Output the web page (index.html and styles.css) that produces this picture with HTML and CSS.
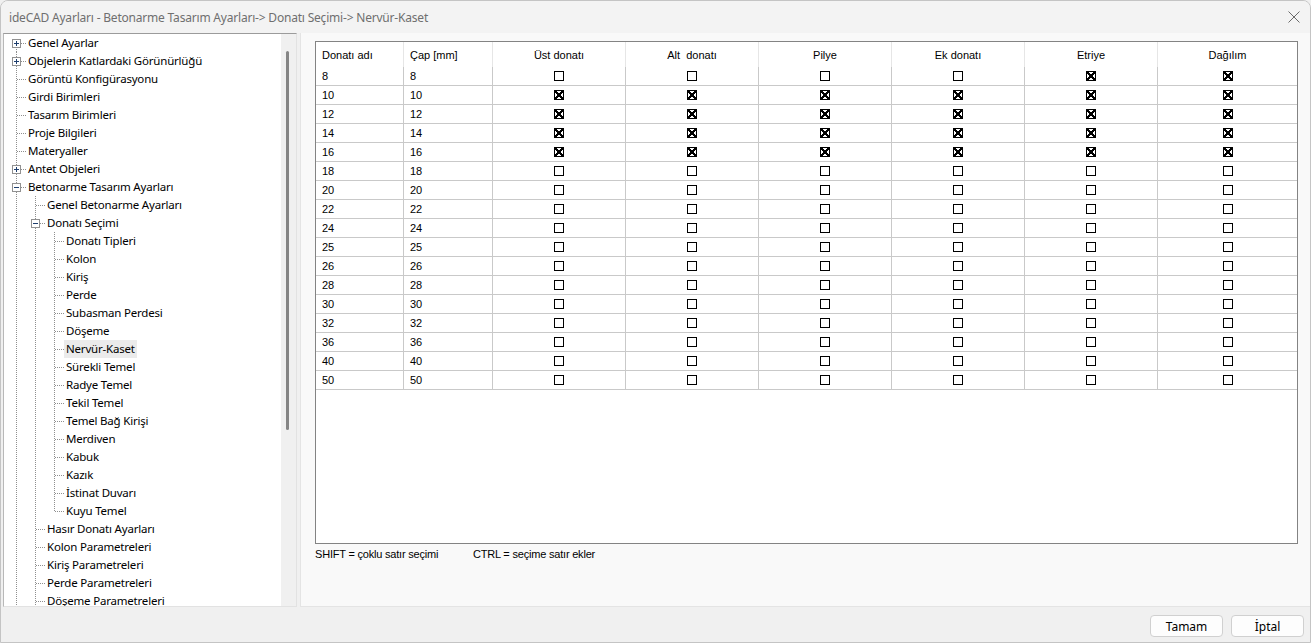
FILE: index.html
```html
<!DOCTYPE html>
<html lang="tr">
<head>
  <meta charset="UTF-8">
  <title>ideCAD Ayarları</title>
  <link rel="stylesheet" href="styles.css">
</head>
<body>
<div class="win">
  <div class="titlebar">
    <span class="title">ideCAD Ayarları - Betonarme Tasarım Ayarları-&gt; Donatı Seçimi-&gt; Nervür-Kaset</span>
    <svg class="close" width="12" height="12" viewBox="0 0 12 12"><path d="M0.5 0.5L11.5 11.5M11.5 0.5L0.5 11.5" stroke="#6a6a6a" stroke-width="1" fill="none"/></svg>
  </div>

  <div class="main">
    <!-- left tree -->
    <div class="treebox">
      <ul class="tree">
        <li><div class="row"><i class="exp plus"></i><span class="lbl">Genel Ayarlar</span></div></li>
        <li><div class="row"><i class="exp plus"></i><span class="lbl">Objelerin Katlardaki Görünürlüğü</span></div></li>
        <li><div class="row"><i class="noexp"></i><span class="lbl">Görüntü Konfigürasyonu</span></div></li>
        <li><div class="row"><i class="noexp"></i><span class="lbl">Girdi Birimleri</span></div></li>
        <li><div class="row"><i class="noexp"></i><span class="lbl">Tasarım Birimleri</span></div></li>
        <li><div class="row"><i class="noexp"></i><span class="lbl">Proje Bilgileri</span></div></li>
        <li><div class="row"><i class="noexp"></i><span class="lbl">Materyaller</span></div></li>
        <li><div class="row"><i class="exp plus"></i><span class="lbl">Antet Objeleri</span></div></li>
        <li><div class="row"><i class="exp"></i><span class="lbl">Betonarme Tasarım Ayarları</span></div>
          <ul>
            <li><div class="row"><i class="noexp"></i><span class="lbl">Genel Betonarme Ayarları</span></div></li>
            <li><div class="row"><i class="exp"></i><span class="lbl">Donatı Seçimi</span></div>
              <ul>
                <li><div class="row"><i class="noexp"></i><span class="lbl">Donatı Tipleri</span></div></li>
                <li><div class="row"><i class="noexp"></i><span class="lbl">Kolon</span></div></li>
                <li><div class="row"><i class="noexp"></i><span class="lbl">Kiriş</span></div></li>
                <li><div class="row"><i class="noexp"></i><span class="lbl">Perde</span></div></li>
                <li><div class="row"><i class="noexp"></i><span class="lbl">Subasman Perdesi</span></div></li>
                <li><div class="row"><i class="noexp"></i><span class="lbl">Döşeme</span></div></li>
                <li><div class="row"><i class="noexp"></i><span class="lbl sel">Nervür-Kaset</span></div></li>
                <li><div class="row"><i class="noexp"></i><span class="lbl">Sürekli Temel</span></div></li>
                <li><div class="row"><i class="noexp"></i><span class="lbl">Radye Temel</span></div></li>
                <li><div class="row"><i class="noexp"></i><span class="lbl">Tekil Temel</span></div></li>
                <li><div class="row"><i class="noexp"></i><span class="lbl">Temel Bağ Kirişi</span></div></li>
                <li><div class="row"><i class="noexp"></i><span class="lbl">Merdiven</span></div></li>
                <li><div class="row"><i class="noexp"></i><span class="lbl">Kabuk</span></div></li>
                <li><div class="row"><i class="noexp"></i><span class="lbl">Kazık</span></div></li>
                <li><div class="row"><i class="noexp"></i><span class="lbl">İstinat Duvarı</span></div></li>
                <li class="last"><div class="row"><i class="noexp"></i><span class="lbl">Kuyu Temel</span></div></li>
              </ul>
            </li>
            <li><div class="row"><i class="noexp"></i><span class="lbl">Hasır Donatı Ayarları</span></div></li>
            <li><div class="row"><i class="noexp"></i><span class="lbl">Kolon Parametreleri</span></div></li>
            <li><div class="row"><i class="noexp"></i><span class="lbl">Kiriş Parametreleri</span></div></li>
            <li><div class="row"><i class="noexp"></i><span class="lbl">Perde Parametreleri</span></div></li>
            <li><div class="row"><i class="noexp"></i><span class="lbl">Döşeme Parametreleri</span></div></li>
          </ul>
        </li>
      </ul>
      <div class="vscroll"><div class="thumb"></div></div>
    </div>

    <!-- right side -->
    <div class="content">
      <div class="gridbox">
        <table class="grid">
          <colgroup>
            <col style="width:88px"><col style="width:89px">
            <col style="width:133px"><col style="width:133px"><col style="width:133px">
            <col style="width:133px"><col style="width:133px"><col>
          </colgroup>
          <thead>
            <tr>
              <th class="l">Donatı adı</th><th class="l">Çap [mm]</th><th>Üst donatı</th><th>Alt  donatı</th>
              <th>Pilye</th><th>Ek donatı</th><th>Etriye</th><th>Dağılım</th>
            </tr>
          </thead>
          <tbody>
            <tr><td>8</td><td>8</td><td><i class="cb"></i></td><td><i class="cb"></i></td><td><i class="cb"></i></td><td><i class="cb"></i></td><td><i class="cb on"></i></td><td><i class="cb on"></i></td></tr>
            <tr><td>10</td><td>10</td><td><i class="cb on"></i></td><td><i class="cb on"></i></td><td><i class="cb on"></i></td><td><i class="cb on"></i></td><td><i class="cb on"></i></td><td><i class="cb on"></i></td></tr>
            <tr><td>12</td><td>12</td><td><i class="cb on"></i></td><td><i class="cb on"></i></td><td><i class="cb on"></i></td><td><i class="cb on"></i></td><td><i class="cb on"></i></td><td><i class="cb on"></i></td></tr>
            <tr><td>14</td><td>14</td><td><i class="cb on"></i></td><td><i class="cb on"></i></td><td><i class="cb on"></i></td><td><i class="cb on"></i></td><td><i class="cb on"></i></td><td><i class="cb on"></i></td></tr>
            <tr><td>16</td><td>16</td><td><i class="cb on"></i></td><td><i class="cb on"></i></td><td><i class="cb on"></i></td><td><i class="cb on"></i></td><td><i class="cb on"></i></td><td><i class="cb on"></i></td></tr>
            <tr><td>18</td><td>18</td><td><i class="cb"></i></td><td><i class="cb"></i></td><td><i class="cb"></i></td><td><i class="cb"></i></td><td><i class="cb"></i></td><td><i class="cb"></i></td></tr>
            <tr><td>20</td><td>20</td><td><i class="cb"></i></td><td><i class="cb"></i></td><td><i class="cb"></i></td><td><i class="cb"></i></td><td><i class="cb"></i></td><td><i class="cb"></i></td></tr>
            <tr><td>22</td><td>22</td><td><i class="cb"></i></td><td><i class="cb"></i></td><td><i class="cb"></i></td><td><i class="cb"></i></td><td><i class="cb"></i></td><td><i class="cb"></i></td></tr>
            <tr><td>24</td><td>24</td><td><i class="cb"></i></td><td><i class="cb"></i></td><td><i class="cb"></i></td><td><i class="cb"></i></td><td><i class="cb"></i></td><td><i class="cb"></i></td></tr>
            <tr><td>25</td><td>25</td><td><i class="cb"></i></td><td><i class="cb"></i></td><td><i class="cb"></i></td><td><i class="cb"></i></td><td><i class="cb"></i></td><td><i class="cb"></i></td></tr>
            <tr><td>26</td><td>26</td><td><i class="cb"></i></td><td><i class="cb"></i></td><td><i class="cb"></i></td><td><i class="cb"></i></td><td><i class="cb"></i></td><td><i class="cb"></i></td></tr>
            <tr><td>28</td><td>28</td><td><i class="cb"></i></td><td><i class="cb"></i></td><td><i class="cb"></i></td><td><i class="cb"></i></td><td><i class="cb"></i></td><td><i class="cb"></i></td></tr>
            <tr><td>30</td><td>30</td><td><i class="cb"></i></td><td><i class="cb"></i></td><td><i class="cb"></i></td><td><i class="cb"></i></td><td><i class="cb"></i></td><td><i class="cb"></i></td></tr>
            <tr><td>32</td><td>32</td><td><i class="cb"></i></td><td><i class="cb"></i></td><td><i class="cb"></i></td><td><i class="cb"></i></td><td><i class="cb"></i></td><td><i class="cb"></i></td></tr>
            <tr><td>36</td><td>36</td><td><i class="cb"></i></td><td><i class="cb"></i></td><td><i class="cb"></i></td><td><i class="cb"></i></td><td><i class="cb"></i></td><td><i class="cb"></i></td></tr>
            <tr><td>40</td><td>40</td><td><i class="cb"></i></td><td><i class="cb"></i></td><td><i class="cb"></i></td><td><i class="cb"></i></td><td><i class="cb"></i></td><td><i class="cb"></i></td></tr>
            <tr><td>50</td><td>50</td><td><i class="cb"></i></td><td><i class="cb"></i></td><td><i class="cb"></i></td><td><i class="cb"></i></td><td><i class="cb"></i></td><td><i class="cb"></i></td></tr>
          </tbody>
        </table>
      </div>
      <div class="hints">
        <span class="hint">SHIFT = çoklu satır seçimi</span>
        <span class="hint">CTRL = seçime satır ekler</span>
      </div>
    </div>
  </div>

  <div class="footer">
    <button class="btn">Tamam</button>
    <button class="btn">İptal</button>
  </div>
</div>
</body>
</html>
```

FILE: styles.css
```css
:root {
  --dots: #8f8f8f;
}

html, body {
  margin: 0;
  padding: 0;
  background: #f0f0f0;
}

.win {
  width: 1311px;
  height: 643px;
  box-sizing: border-box;
  border: 1px solid #c4c4c4;
  border-radius: 8px 8px 0 0;
  background: #f0f0f0;
  display: flex;
  flex-direction: column;
  overflow: hidden;
  font-family: "Noto Sans", sans-serif;
}

/* title bar */
.titlebar {
  height: 32px;
  flex: none;
  display: flex;
  align-items: center;
  justify-content: space-between;
  padding: 0 9px 0 8px;
  background: #f3f3f3;
}
.title {
  font-size: 12px;
  letter-spacing: -0.2px;
  color: #6f6f6f;
}
.close {
  margin-right: 1px;
}

.main {
  flex: 1;
  display: flex;
  min-height: 0;
}

/* tree */
.treebox {
  width: 295px;
  margin-left: 2px;
  box-sizing: border-box;
  display: flex;
  background: #fff;
  border-top: 1px solid #9b9b9b;
  border-left: 1px solid #b8b8b8;
  border-right: 1px solid #e2e2e2;
  border-bottom: 1px solid #e2e2e2;
  overflow: hidden;
}
.tree {
  flex: 1;
  margin: 0;
  padding: 0;
  list-style: none;
  overflow: hidden;
}
.tree ul {
  list-style: none;
  margin: 0;
  padding: 0 0 0 19px;
}
.tree li {
  background: repeating-linear-gradient(to bottom, var(--dots) 0 1px, transparent 1px 2px) no-repeat 12px 0 / 1px 100%;
}
.tree li.last {
  background-size: 1px 10px;
}
.tree > li:first-child {
  background-position: 12px 9px;
}
.row {
  height: 18px;
  display: flex;
  align-items: center;
  padding-left: 8px;
  font-size: 11.5px;
  letter-spacing: -0.2px;
  color: #000;
  white-space: nowrap;
  background: repeating-linear-gradient(to right, var(--dots) 0 1px, transparent 1px 2px) no-repeat 13px 9px / 9px 1px;
}
.exp, .noexp {
  width: 9px;
  height: 9px;
  flex: none;
  margin-right: 5px;
  box-sizing: border-box;
}
.exp {
  border: 1px solid #919191;
  background:
    linear-gradient(#1f3f6e, #1f3f6e) no-repeat center / 5px 1px,
    #fff;
}
.exp.plus {
  background:
    linear-gradient(#1f3f6e, #1f3f6e) no-repeat center / 5px 1px,
    linear-gradient(#1f3f6e, #1f3f6e) no-repeat center / 1px 5px,
    #fff;
}
.lbl {
  padding: 0 2px;
  line-height: 18px;
}
.lbl.sel {
  background: #ebebeb;
}

.vscroll {
  width: 15px;
  flex: none;
  background: #f0f0f0;
}
.vscroll .thumb {
  width: 3px;
  height: 379px;
  margin: 17px 0 0 5px;
  background: #858585;
  border-radius: 2px;
}

/* right side */
.content {
  flex: 1;
  margin-left: 3px;
  box-sizing: border-box;
  padding: 8px 12px 0 14px;
  background: #f9f9f9;
  border-left: 1px solid #e4e4e4;
  border-bottom: 1px solid #e4e4e4;
}
.gridbox {
  height: 503px;
  box-sizing: border-box;
  border: 1px solid #838383;
  background: #fff;
  overflow: hidden;
}
.grid {
  width: 981px;
  table-layout: fixed;
  border-collapse: separate;
  border-spacing: 0;
  font-family: "Liberation Sans", Arial, sans-serif;
  font-size: 11px;
  color: #000;
}
.grid th {
  height: 25px;
  padding: 0 6px;
  font-weight: normal;
  text-align: center;
  white-space: pre;
  border-right: 1px solid #e6e6e6;
}
.grid th.l {
  text-align: left;
}
.grid td {
  height: 18px;
  padding: 0 6px;
  border-right: 1px solid #c9c9c9;
  border-bottom: 1px solid #c9c9c9;
  text-align: center;
  line-height: 18px;
}
.grid td:nth-child(-n+2) {
  text-align: left;
}
.grid th:last-child,
.grid td:last-child {
  border-right: none;
}

.cb {
  display: inline-block;
  width: 10px;
  height: 10px;
  box-sizing: border-box;
  border: 1px solid #000;
  vertical-align: -1px;
}
.cb.on {
  border-width: 1.5px;
  background:
    linear-gradient(45deg, transparent 38%, #000 38% 62%, transparent 62%),
    linear-gradient(-45deg, transparent 38%, #000 38% 62%, transparent 62%);
}

.hints {
  display: flex;
  padding-top: 4px;
  font-family: "Liberation Sans", Arial, sans-serif;
  font-size: 11px;
  letter-spacing: -0.2px;
  color: #000;
}
.hint:first-child {
  width: 158px;
}

/* bottom buttons */
.footer {
  height: 35px;
  flex: none;
  display: flex;
  justify-content: flex-end;
  align-items: flex-start;
  gap: 8px;
  padding: 8px 6px 0 0;
  box-sizing: border-box;
}
.btn {
  width: 73px;
  height: 22px;
  border: 1px solid #d0d0d0;
  border-radius: 4px;
  background: #fdfdfd;
  font-family: "Noto Sans", sans-serif;
  font-size: 12px;
  color: #000;
  padding: 0;
}
```
